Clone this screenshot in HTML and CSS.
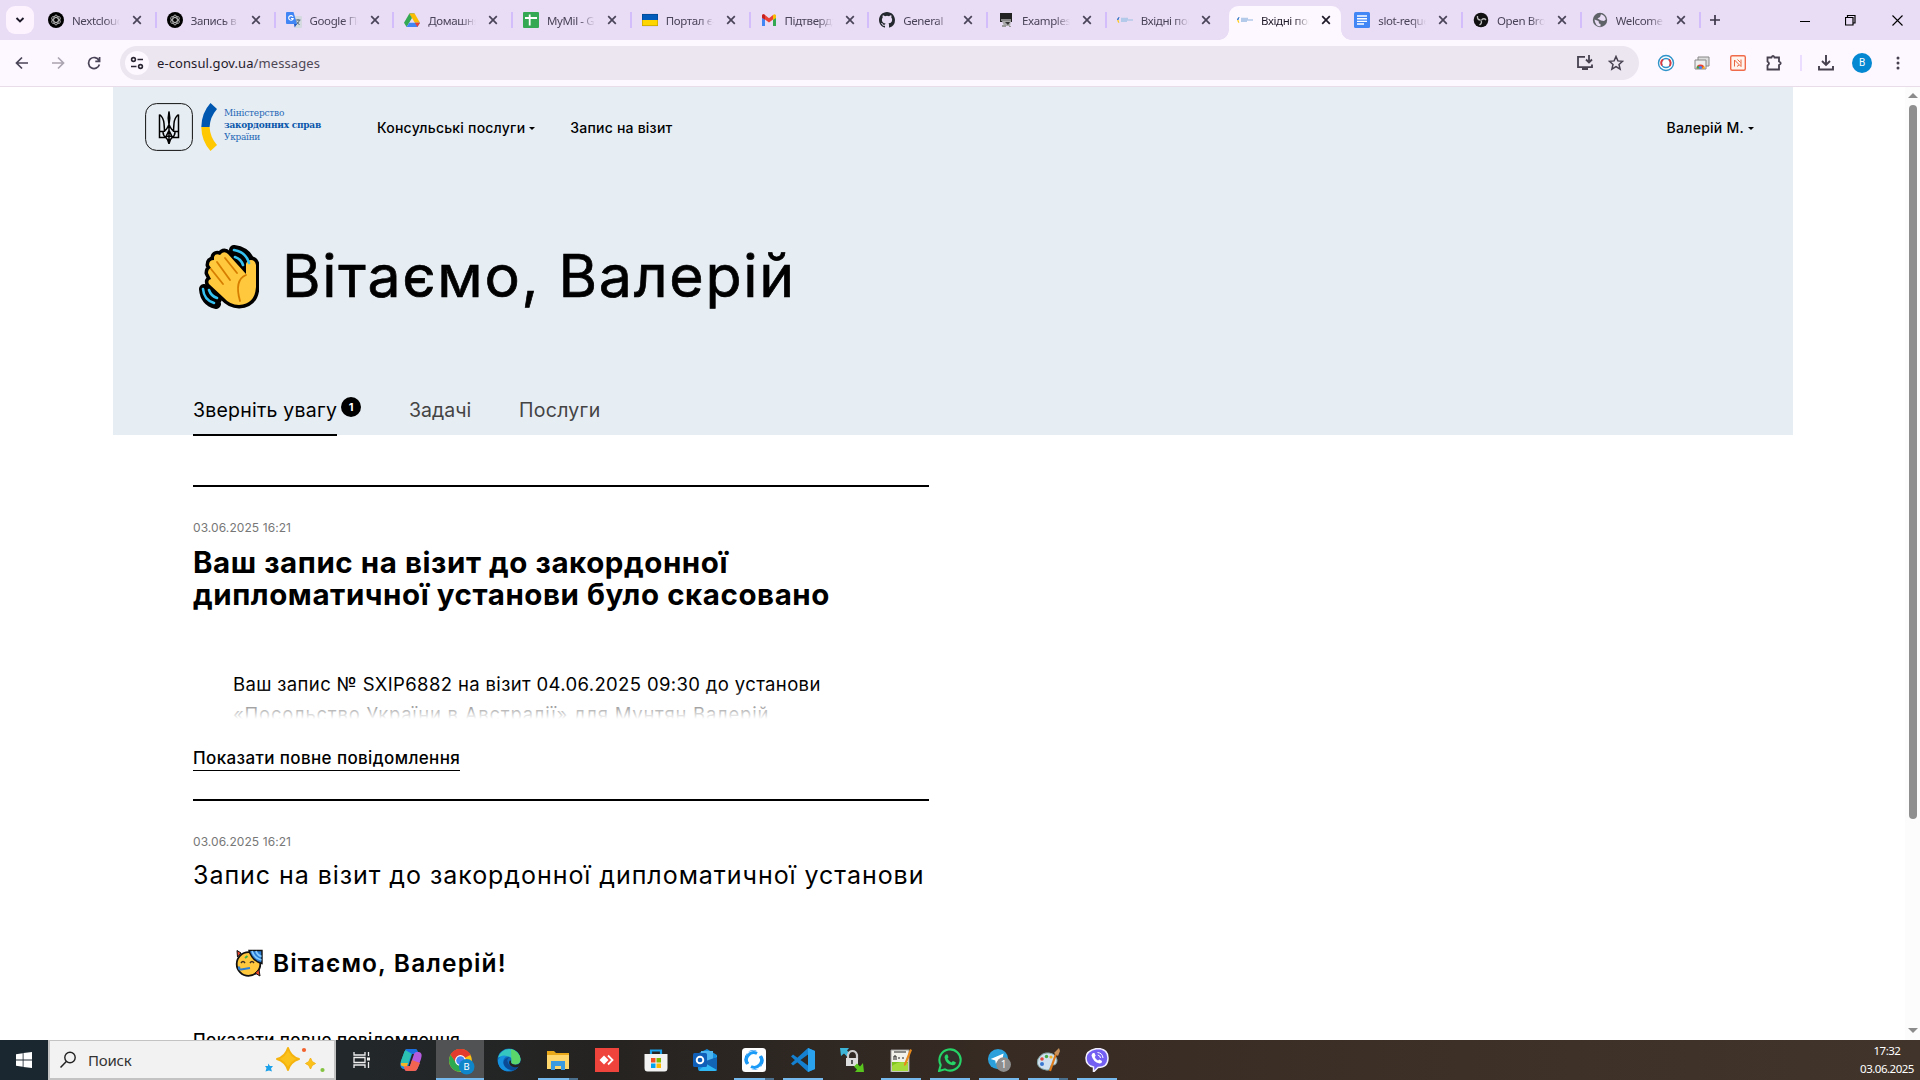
FILE: index.html
```
<!DOCTYPE html>
<html lang="uk">
<head>
<meta charset="utf-8">
<title>Вхідні повідомлення</title>
<link rel="stylesheet" href="styles.css">
</head>
<body>
<svg class="defs" width="0" height="0">
  <symbol id="x" viewBox="0 0 10 10"><path d="M1.2 1.2l7.6 7.6M8.8 1.2L1.2 8.8" stroke="currentColor" stroke-width="1.7" fill="none"/></symbol>
  <symbol id="gpt" viewBox="0 0 16 16"><circle cx="8" cy="8" r="8" fill="#000"/><g fill="none" stroke="#ccc" stroke-width=".8"><ellipse cx="8" cy="8" rx="2.3" ry="4.9"/><ellipse cx="8" cy="8" rx="2.3" ry="4.9" transform="rotate(60 8 8)"/><ellipse cx="8" cy="8" rx="2.3" ry="4.9" transform="rotate(120 8 8)"/></g></symbol>
  <symbol id="mfa" viewBox="0 0 16 16"><path d="M2 5Q-.2 6.500 .3 8H1.500Q1.200 6.700 2.500 5.500z" fill="#0057b7"/><path d="M.3 8Q.4 10 1.800 11L2.400 10.300Q1.400 9.300 1.500 8z" fill="#ffc800"/><path d="M4 6.500h7M4 8h12M4 9.400h6" stroke="#b4caea" stroke-width="1.300"/></symbol>
</svg>

<header class="tabstrip">
  <button class="tab-search"><svg width="10" height="8" viewBox="0 0 10 8"><path d="M1.500 2l3.500 3.500L8.500 2" fill="none" stroke="#1f1a29" stroke-width="1.900"/></svg></button>
  <div class="tabs">
    <div class="tab"><svg class="fav"><use href="#gpt"/></svg><span>Nextcloud</span><svg class="cl"><use href="#x"/></svg></div>
    <div class="tab"><svg class="fav"><use href="#gpt"/></svg><span>Запись в к</span><svg class="cl"><use href="#x"/></svg></div>
    <div class="tab"><svg class="fav" viewBox="0 0 16 16"><path d="M7 4h8q1 0 1 1v10q0 1-1 1H9z" fill="#d5d9e0"/><path d="M9.500 8h5M12 7v1.500M10 12.500q3-1.500 3.500-4.500M10.500 9.500l3 3.500" stroke="#5d7480" fill="none"/><path d="M1 0h6.500l3.500 12H1q-1 0-1-1V1q0-1 1-1z" fill="#4285f4"/><path d="M8 12h3l-2.300 3.500z" fill="#2459c4"/><path d="M7 4.800A2.300 2.300 0 1 0 7.200 6.500H5" stroke="#fff" stroke-width="1.100" fill="none"/></svg><span>Google Пе</span><svg class="cl"><use href="#x"/></svg></div>
    <div class="tab"><svg class="fav" viewBox="0 0 16 16"><path d="M5.400 1.500h5.200L8 6z" fill="#188038"/><path d="M5.400 1.500L0 10.800l2.600 4.200L8 6z" fill="#34a853"/><path d="M10.600 1.500L16 10.800h-5.200L5.400 1.500z" fill="#fbbc04"/><path d="M5.200 10.800H16L13.400 15H2.600z" fill="#4285f4"/><path d="M10.800 10.800H16L13.400 15z" fill="#ea4335"/></svg><span>Домашня с</span><svg class="cl"><use href="#x"/></svg></div>
    <div class="tab"><svg class="fav" viewBox="0 0 16 16"><rect width="16" height="16" rx="1" fill="#34a853"/><path d="M6.700 2.500v11M2 6h12" stroke="#fff" stroke-width="1.800"/></svg><span>MyMil - Go</span><svg class="cl"><use href="#x"/></svg></div>
    <div class="tab"><svg class="fav" viewBox="0 0 16 16"><path d="M0 2h16v6H0z" fill="#005bbb"/><path d="M0 8h16v6H0z" fill="#ffd500"/><path d="M.3 2.300h15.400v11.400H.3z" fill="none" stroke="#0003"/></svg><span>Портал є-</span><svg class="cl"><use href="#x"/></svg></div>
    <div class="tab"><svg class="fav" viewBox="0 0 16 16"><path d="M1 3v11h3V6z" fill="#4285f4"/><path d="M12 6v8h3V3z" fill="#34a853"/><path d="M1 6V3.500Q2 1.500 4 3l4 3.200L12 3v4.500L8 10.500 4 7.500z" fill="#ea4335"/><path d="M12 3q2-1.500 3 .5V6l-3 2z" fill="#fbbc04"/><path d="M1 3.500Q2 1.500 4 3v4.500L1 5.500z" fill="#c5221f"/></svg><span>Підтвердж</span><svg class="cl"><use href="#x"/></svg></div>
    <div class="tab"><svg class="fav" viewBox="0 0 16 16"><path fill="#24292f" d="M8 0C3.580 0 0 3.580 0 8c0 3.540 2.290 6.530 5.470 7.590.4.070.55-.17.55-.38 0-.19-.01-.82-.01-1.490-2.010.37-2.530-.49-2.690-.94-.09-.23-.48-.94-.82-1.130-.28-.15-.68-.52-.01-.53.63-.01 1.080.58 1.230.82.72 1.210 1.870.87 2.330.66.07-.52.28-.87.51-1.070-1.780-.2-3.640-.89-3.640-3.950 0-.87.31-1.590.82-2.150-.08-.2-.36-1.020.08-2.120 0 0 .67-.21 2.200.82a7.420 7.420 0 0 1 4 0c1.530-1.040 2.200-.82 2.200-.82.44 1.100.16 1.920.08 2.120.51.56.82 1.270.82 2.150 0 3.070-1.870 3.750-3.650 3.950.29.25.54.73.54 1.480 0 1.070-.01 1.930-.01 2.200 0 .21.15.46.55.38A8.010 8.010 0 0 0 16 8c0-4.420-3.580-8-8-8z"/></svg><span>General</span><svg class="cl"><use href="#x"/></svg></div>
    <div class="tab"><svg class="fav" viewBox="0 0 16 16"><path d="M2 1h12v9H2z" fill="#222"/><path d="M3 7h10v2H3z" fill="#888"/><path d="M4 9h9l-1 5H6z" fill="#aaa"/><path d="M7 10h5l-2 3z" fill="#333"/><path d="M4 13h4v2H4zM11 14h2v1h-2z" fill="#999"/></svg><span>Examples</span><svg class="cl"><use href="#x"/></svg></div>
    <div class="tab last"><svg class="fav"><use href="#mfa"/></svg><span>Вхідні пов</span><svg class="cl"><use href="#x"/></svg></div>
    <div class="tab active"><svg class="fav"><use href="#mfa"/></svg><span>Вхідні пов</span><svg class="cl"><use href="#x"/></svg></div>
    <div class="tab"><svg class="fav" viewBox="0 0 16 16"><rect width="16" height="16" rx="1.500" fill="#4285f4"/><path d="M3 4h10M3 6.700h10M3 9.400h10M3 12h7" stroke="#fff" stroke-width="1.400"/></svg><span>slot-reque</span><svg class="cl"><use href="#x"/></svg></div>
    <div class="tab"><svg class="fav" viewBox="0 0 16 16"><circle cx="8" cy="8" r="7.300" fill="#111"/><path d="M7.500 8Q4 8 4.500 4M8.500 8Q11 5.500 13 8M8 8.500Q9.500 11 6.500 13" stroke="#bbb" stroke-width="1.300" fill="none"/></svg><span>Open Broa</span><svg class="cl"><use href="#x"/></svg></div>
    <div class="tab"><svg class="fav" viewBox="0 0 16 16"><circle cx="8" cy="8" r="7.200" fill="#5f6368"/><path d="M2.500 7.500l4 1.500.5 2.500 1.500.5v2.500Q3 14 2.500 7.500zM9 2.200L8 5 5.500 6.500 9 8.500l3 .5 1.800-1.500Q13 3 9 2.200z" fill="#e9dcf5"/></svg><span>Welcome t</span><svg class="cl"><use href="#x"/></svg></div>
  </div>
  <svg class="plus" width="12" height="12" viewBox="0 0 12 12"><path d="M6 1v10M1 6h10" stroke="#3c3649" stroke-width="1.700"/></svg>
  <div class="winctl">
    <svg width="10" height="11" viewBox="0 0 10 11"><path d="M0 6.500h10" stroke="#000"/></svg>
    <svg width="11" height="11" viewBox="0 0 11 11"><path d="M.5 2.500h7.500v7.500H.5zM2.500 2.500V.5H10v7.500H8" stroke="#000" fill="none" stroke-width="1.200"/></svg>
    <svg width="11" height="11" viewBox="0 0 11 11"><path d="M.5.5l10 10M10.500.5l-10 10" stroke="#000" stroke-width="1.100"/></svg>
  </div>
</header>

<div class="toolbar">
  <div class="nav-btns">
    <svg width="14" height="14" viewBox="0 0 14 14"><path d="M13 7H2M7 1.500L1.500 7 7 12.500" fill="none" stroke="#4a4458" stroke-width="1.700"/></svg>
    <svg width="14" height="14" viewBox="0 0 14 14"><path d="M1 7h11M7 1.500L12.500 7 7 12.500" fill="none" stroke="#aaa4b0" stroke-width="1.700"/></svg>
    <svg width="14" height="14" viewBox="0 0 14 14"><path d="M12 4.500A5.500 5.500 0 1 0 12.400 8.500M12.600 1v4.300H8.300" fill="none" stroke="#4a4458" stroke-width="1.700"/></svg>
  </div>
  <div class="omnibox">
    <span class="site"><svg width="14" height="14" viewBox="0 0 14 14"><g fill="none" stroke="#2b2633" stroke-width="1.600"><circle cx="3.500" cy="3.500" r="1.900"/><path d="M7.500 3.500H13M1 10.500h5.500"/><circle cx="10.500" cy="10.500" r="1.900"/></g></svg></span>
    <span class="url">e-consul.gov.ua<i>/messages</i></span>
    <svg class="inst" width="18" height="16" viewBox="0 0 18 16"><path d="M9 1.800H2v10.400h14V9.500M13 0v7M10 4.500l3 3 3-3M6 14h6" fill="none" stroke="#46404f" stroke-width="1.800"/></svg>
    <svg width="16" height="16" viewBox="0 0 16 16"><path d="M8 1.500l1.900 4.400 4.700.4-3.600 3.100 1.100 4.700L8 11.600l-4.100 2.500L5 9.400 1.400 6.300l4.700-.4z" fill="none" stroke="#46404f" stroke-width="1.500"/></svg>
  </div>
  <div class="exts">
    <svg width="18" height="18" viewBox="0 0 18 18"><circle cx="9" cy="9" r="7.500" fill="#fff" stroke="#2e93c9" stroke-width="1.400"/><circle cx="9" cy="9" r="4.600" fill="none" stroke="#2e93c9" stroke-width="1.500"/><path d="M5 11.500A4.600 4.600 0 0 1 6 5.500M12 5.500a4.600 4.600 0 0 1 .5 6.500" fill="none" stroke="#e0393e" stroke-width="1.800"/></svg>
    <svg width="18" height="18" viewBox="0 0 18 18"><path d="M5 3h11v9H5z" fill="#ddd" stroke="#888"/><path d="M2 6h11v9H2z" fill="#eee" stroke="#888"/><path d="M3.500 14.500a4 4 0 0 1 8 0" fill="#ea4335"/><path d="M3.500 14.500a4 4 0 0 1 1.500-3l2 3z" fill="#34a853"/><path d="M9 14.500l2-2.500q1 1 .5 2.500z" fill="#fbbc04"/><circle cx="7.500" cy="13.500" r="1.600" fill="#4285f4"/></svg>
    <svg width="18" height="18" viewBox="0 0 18 18"><rect x="1.700" y="1.700" width="14.600" height="14.600" rx="1.500" fill="#fff4ee" stroke="#ef6b4a" stroke-width="1.400"/><path d="M5.500 12.500V6l6.500 6.500V5.500M8.500 5.500l3 3M10 11l-2 1.500" stroke="#e8663f" fill="none" stroke-width="1"/></svg>
    <svg width="18" height="18" viewBox="0 0 18 18"><path d="M2.500 3.500h4Q8 .3 9.500 3.500H14v4q3.500 1.500 0 3.500v4.500H2.500v-4q3-2 0-4z" fill="none" stroke="#46404f" stroke-width="1.800"/></svg>
  </div>
  <div class="right-btns">
    <svg width="16" height="16" viewBox="0 0 16 16"><path d="M8 0v9.500M4 6l4 4 4-4M1 11v3.500h14V11" fill="none" stroke="#46404f" stroke-width="1.900"/></svg>
    <span class="avatar">B</span>
    <svg width="4" height="14" viewBox="0 0 4 14" fill="#46404f"><circle cx="2" cy="2" r="1.500"/><circle cx="2" cy="7" r="1.500"/><circle cx="2" cy="12" r="1.500"/></svg>
  </div>
</div>

<main class="viewport">
  <div class="page">
    <section class="hero">
      <div class="top">
        <svg class="trident" width="48" height="48" viewBox="0 0 48 48"><rect x=".6" y=".6" width="46.800" height="46.800" rx="11" fill="none" stroke="#111"/><g fill="none" stroke="#000" stroke-width="1.500"><path d="M24 8.500v19M24 8.500q-1.500 6 0 13q1.500-7 0-13M14.500 11.500v23h6.200M33.500 11.500v23h-6.200M14.500 11.500q4 3 4.500 9t.5 8.500M33.500 11.500q-4 3-4.500 9t-.5 8.500M14.500 28.500h3.500q3 0 6-7q3 7 6 7h3.500M18 28.500q0 4 2.700 6t3.300 6.500q.5-4.500 3.300-6.500t2.700-6M20.500 34.500q3.500-7 3.500-7t3.500 7q-3.500-3-7 0zM24 27.500V41"/></g></svg>
        <svg class="arc" width="18" height="48" viewBox="0 0 18 48"><path d="M9.500 0L16 6Q9 14 8.600 24H.3Q.5 10 9.500 0z" fill="#0057b0"/><path d="M.3 24h8.300Q9 34 16 42l-6.500 6Q.5 38 .3 24z" fill="#ffc800"/></svg>
        <div class="brand"><span class="b1">Міністерство</span><b>закордонних справ</b><span class="b3">України</span></div>
        <nav class="menu"><span>Консульські послуги<i class="caret"></i></span><span>Запис на візит</span></nav>
        <span class="user">Валерій М.<i class="caret"></i></span>
      </div>
      <h1><svg width="60" height="64" viewBox="0 0 60 64"><g stroke-linecap="round" stroke-linejoin="round"><g stroke="#000" stroke-width="10" fill="none"><path d="M35 5q14 2 17 15M35 12q8 2 10 9M5 44q1 12 12 15M10 46q2 6 8 8"/></g><path d="M12 34L9 28q0-4 3-5l-2-3q0-5 5-5l0-3q1-4 6-2l2-2q3-2 6 1l18 20V19q1-4 5-4t5 5v22Q56 59 40 60q-9 0-16-8L10 39q-2-4 2-5z" fill="#ffc83d" stroke="#000" stroke-width="7"/><path d="M12 34L9 28q0-4 3-5l-2-3q0-5 5-5l0-3q1-4 6-2l2-2q3-2 6 1l18 20V19q1-4 5-4t5 5v22Q56 59 40 60q-9 0-16-8L10 39q-2-4 2-5z" fill="#ffc83d"/><path d="M26 13l12 15M18 17l13 18M12 24l12 15M47 30q-12 5-6 26" fill="none" stroke="#d67d00" stroke-width="1.800"/><path d="M35 5q12 2 15 13M36 12q6 2 8 8M4 44q1 11 11 14M10 45q2 6 8 8" stroke="#35c1f1" stroke-width="2.600" fill="none"/></g></svg><span>Вітаємо, Валерій</span></h1>
      <div class="sections">
        <span class="sec on">Зверніть увагу</span><span class="badge">1</span>
        <span class="sec s2">Задачі</span><span class="sec s3">Послуги</span>
      </div>
    </section>

    <article class="msg">
      <time>03.06.2025 16:21</time>
      <h2>Ваш запис на візит до закордонної<br>дипломатичної установи було скасовано</h2>
      <div class="excerpt"><p>Ваш запис № SXIP6882 на візит 04.06.2025 09:30 до установи</p><p class="l2">«Посольство України в Австралії» для Мунтян Валерій</p></div>
      <a class="more">Показати повне повідомлення</a>
    </article>
    <article class="msg second">
      <time>03.06.2025 16:21</time>
      <h2 class="light">Запис на візит до закордонної дипломатичної установи</h2>
      <div class="greet"><svg width="30" height="30" viewBox="0 0 30 30"><circle cx="14.500" cy="16" r="11.800" fill="#ffc83d" stroke="#111" stroke-width="1.800"/><path d="M15 2.500h13v13Q18 13 15 2.500z" fill="#2b7cd3" stroke="#111" stroke-width="1.400"/><path d="M18 3q2 7 9.500 9M22 3q1 4 5.500 5.500" stroke="#83cbff" stroke-width="1.800" fill="none"/><path d="M3 2.500l4 2.500-3.500 4zM26 28l-5-3 4-3.500z" fill="#e8442e" stroke="#111"/><path d="M7 15q2-3 4 0M16 15q2-3 4 0" fill="none" stroke="#403020" stroke-width="1.500"/><path d="M11 10l2.500-2" stroke="#3bb44a" stroke-width="2"/><path d="M16 20l-9 1.500Q4 21.500 5.500 18.500" fill="none" stroke="#2b7cd3" stroke-width="2.200"/></svg><span>Вітаємо, Валерій!</span></div>
      <a class="more">Показати повне повідомлення</a>
    </article>
  </div>
  <div class="scroll"><i class="up"></i><i class="thumb"></i><i class="down"></i></div>
</main>

<footer class="taskbar">
  <div class="start"><svg width="16" height="16" viewBox="0 0 16 16"><path d="M0 2.200l6.700-1v6.400H0zM7.500 1.100L16 0v7.600H7.500zM0 8.400h6.700v6.400l-6.700-1zM7.500 8.400H16V16l-8.500-1.100z" fill="#fff"/></svg></div>
  <div class="search"><svg width="18" height="18" viewBox="0 0 18 18"><circle cx="11" cy="6.500" r="5.200" fill="none" stroke="#222" stroke-width="1.400"/><path d="M7.300 10.500L1.500 16.500" stroke="#222" stroke-width="1.500"/></svg><span>Поиск</span>
    <svg class="stars" width="62" height="28" viewBox="0 0 62 28"><path d="M24 2q2.500 8.500 11 11-8.500 2.500-11 11-2.500-8.500-11-11 8.500-2.500 11-11z" fill="#fbc21b" stroke="#f5b30f" stroke-linejoin="round" stroke-width="2"/><path d="M46.500 12q1 4.500 5 5.500-4 1-5 5.500-1-4.500-5-5.500 4-1 5-5.500z" fill="#fbc21b" stroke="#f5b30f"/><path d="M4 17.500l2 2.500 3 0-2 2.500 1 3-3-1-3.500 1 1-3.500-1.500-2 3 0z" fill="#1ba0ea"/><circle cx="40" cy="4" r="2.100" fill="#f2622f"/><circle cx="58.500" cy="24" r="2.100" fill="#84c341"/></svg></div>
  <div class="apps">
    <div class="app"><svg viewBox="0 0 24 24"><path d="M4 4v3h11V4M4 20v-3h11v3M4 9.500h11v5H4zM18.500 4v4M18.500 14v6" fill="none" stroke="#eee" stroke-width="1.300"/><path d="M17 9.500h3v3h-3z" fill="#eee"/></svg></div>
    <div class="app"><svg viewBox="0 0 24 24"><path d="M9 1h7q2 0 2.500 2l.7 3H13l-4 13q-.7 2-2.700 2H4Q0 19 2 13L5.500 3.500Q6.500 1 9 1z" fill="#1d8be0"/><path d="M5.500 3.500Q6.500 1 9 1h7L12 7l-3 9-7 1q-.5-2 0-4z" fill="#2cc0b2"/><path d="M6 1.700Q7 1 9 1h7q2 0 2.500 2l.7 3H13z" fill="#1b6fe0"/><path d="M15 23H8q-2 0-2.500-2L5 18h6l4-12q.7-2 2.700-2H20q4 1 2 7l-3.500 9.500Q17.500 23 15 23z" fill="#b45be0"/><path d="M15 23H8q-2 0-2.500-2L5 18h6l2-6 8 3-2.500 5.500Q17.500 23 15 23z" fill="#f2644f"/><path d="M2 15q-1 3 2.500 3.500L8 18l1-3z" fill="#f5b52a"/></svg></div>
    <div class="app cur"><svg viewBox="0 0 26 26"><circle cx="12" cy="12" r="11" fill="#fbc116"/><path d="M12 12L2.500 6.500A11 11 0 0 1 21.500 6.500z" fill="#e33b2e"/><path d="M2.500 6.500A11 11 0 0 0 11 23l4-8-7-1z" fill="#2da94f"/><path d="M12 7H21.800A11 11 0 0 0 2.500 6.500L7.500 14z" fill="#e33b2e"/><circle cx="12" cy="12" r="5.200" fill="#fff"/><circle cx="12" cy="12" r="4.100" fill="#4285f4"/><circle cx="18" cy="18" r="7.500" fill="#0f86c9"/><text x="18" y="21.500" text-anchor="middle" font-size="9.500" font-family="Roboto, sans-serif" fill="#fff">B</text></svg></div>
    <div class="app"><svg viewBox="0 0 24 24"><circle cx="12" cy="12" r="11.500" fill="#0f6cbd"/><path d="M1 9.500A11.500 11.500 0 0 1 23.500 11q0 5-5 5.500-5 0-4-3 1-4-3-5-6-1.500-10.500 1z" fill="#35c6c0"/><path d="M14 1a11.500 11.500 0 0 1 9.500 10q0 5-5 5.500-5 0-4-3z" fill="#5ad66a"/><path d="M1 12q3-6 9-4-5 3-3.500 8T14 22.500Q4 25 1 15z" fill="#1490df"/><path d="M13.500 9q-4 1-3 4.500 1 5 7 5.500 3 0 4.500-1-3 5-8 4-7-2-7.500-7 0-5 7-6z" fill="#0b4a94"/><path d="M14 12.500q-1 4 4.500 4.200 3 0 5-2.500l-1 4q-3 2-7 .5-4.500-2-3-6z" fill="#252321"/></svg></div>
    <div class="app run two"><svg viewBox="0 0 24 24"><path d="M1 3h7l2 2h13v16H1z" fill="#e8a81a"/><path d="M1 7h22v14H1z" fill="#ffd66b"/><path d="M5 13h14v9h-4v-4H9v4H5z" fill="#3c9ae0"/></svg></div>
    <div class="app"><svg viewBox="0 0 24 24"><path d="M0 0h24v24H0z" fill="#ef443b"/><path d="M4.500 12L9 7.500l4.500 4.500L9 16.500z" fill="#fff"/><path d="M13 7.500l4.500 4.500-4.500 4.500" fill="none" stroke="#fff" stroke-width="1.800"/></svg></div>
    <div class="app"><svg viewBox="0 0 24 24"><path d="M7 7V2.500h10V7" fill="none" stroke="#1aa0e8" stroke-width="2.200"/><path d="M.5 6h23v14q0 3.500-3 3.500h-17q-3 0-3-3.500z" fill="#f2f2f2"/><path d="M7 10h4.500v4.500H7z" fill="#f25022"/><path d="M12.500 10H17v4.500h-4.500z" fill="#7fba00"/><path d="M7 15.500h4.500V20H7z" fill="#00a4ef"/><path d="M12.500 15.500H17V20h-4.500z" fill="#ffb900"/></svg></div>
    <div class="app"><svg viewBox="0 0 24 24"><path d="M4 6l10-5 10 6v14q0 2-2 2H7q-2 0-2-2z" fill="#1490df"/><path d="M8 3h12v10H8z" fill="#4cb5f0"/><path d="M24 8v13q0 2-2 2H7l-1-1z" fill="#2fb8f3"/><path d="M24 9v13L10 14z" fill="#1264b5"/><rect y="5" width="14" height="14" rx="1.500" fill="#0f5fb8"/><circle cx="7" cy="12" r="3.300" fill="none" stroke="#fff" stroke-width="1.900"/></svg></div>
    <div class="app run two"><svg viewBox="0 0 24 24"><rect width="24" height="24" rx="3.500" fill="#fff"/><path d="M15.500 3.500A9 9 0 0 0 4 16.500L7 14.500A6 6 0 0 1 15.500 3.500z" fill="#0b84ee"/><path d="M8.500 20.500A9 9 0 0 0 20 7.500L17 9.500A6 6 0 0 1 8.500 20.500z" fill="#0b84ee"/><path d="M5.800 16A7.200 7.200 0 0 1 15 5.500M18.200 8A7.200 7.200 0 0 1 9 18.500" fill="none" stroke="#1b9bf8" stroke-width="3"/></svg></div>
    <div class="app run"><svg viewBox="0 0 24 24"><path d="M17 0l7 3v18l-7 3L0 8.500 2 6.500l15 11V6.500L2 17.500 0 15.500z" fill="#1480cf"/><path d="M17 0l7 3v18l-7 3z" fill="#2ba2ee"/></svg></div>
    <div class="app"><svg viewBox="0 0 24 24"><path d="M0 0h9L7 2.500l3 3-3 3-3-3L1 8z" fill="#3db5d9"/><path d="M8 12V7q1-4 4.500-4T17 7v5" fill="none" stroke="#ccc" stroke-width="2.200"/><path d="M6 10h12v8H6z" fill="#ddd"/><path d="M11 12h2v4h-2z" fill="#555"/><path d="M24 24h-9l2-2.500-3-3 3-3 3 3L23 15z" fill="#57c51d"/></svg></div>
    <div class="app run"><svg viewBox="0 0 24 24"><path d="M2 2h18v22H2z" fill="#f2f2ea"/><path d="M3 14h16v9H3z" fill="#7ec51d"/><path d="M3 18q8-6 16-3v8H3z" fill="#a5dc3c"/><path d="M2 2h18v22H2z" fill="none" stroke="#999"/><path d="M5 12V8h2v4M9 10h2M13 10h2M5 4h12" stroke="#222" fill="none"/><path d="M21 1l2 1-6 15-2 1 0-2z" fill="#e8891c"/></svg></div>
    <div class="app run"><svg viewBox="0 0 24 24"><path d="M1 23l1.700-6A10.600 10.600 0 1 1 7 21.300z" fill="#31302b" stroke="#25d366" stroke-width="2.100"/><path d="M8 6.500l1.500 0 1 2.800-1 1.400q1.500 2.500 4 3.700l1.400-1.400 2.900 1.300q0 3-3 3Q8 16.500 6.500 9.500 6.500 7.500 8 6.500z" fill="#25d366"/></svg></div>
    <div class="app run"><svg viewBox="0 0 26 26"><circle cx="12" cy="12" r="11" fill="#2ba0da"/><path d="M4 12l14-6-2.500 12-4-3-2 2-.5-3.500z" fill="#fff"/><circle cx="18" cy="18" r="8" fill="#8d8d8d"/><text x="18" y="22" text-anchor="middle" font-size="11" font-family="Noto Sans, sans-serif" fill="#fff">1</text></svg></div>
    <div class="app run two"><svg viewBox="0 0 24 24"><path d="M2 11q4-7 11-6t8 7q0 5-4 5-3 0-3 3 0 3-4 2Q-1 20 2 11z" fill="#cfe0ee" stroke="#8aa"/><circle cx="6" cy="11" r="1.800" fill="#e2463a"/><circle cx="10.500" cy="8.500" r="1.700" fill="#46a948"/><circle cx="15" cy="9" r="1.600" fill="#f0b429"/><circle cx="6" cy="16" r="2" fill="#3a78d0"/><path d="M20 6l-6 17" stroke="#dc7a1b" stroke-width="2.200"/><path d="M18 5l5-5 1 3-2 5z" fill="#c8925a"/></svg></div>
    <div class="app run"><svg viewBox="0 0 24 24"><path d="M12 .5Q23 .5 23 10t-10 9.500L8.500 24v-5Q1 17.500 1 10T12 .5z" fill="#7360f2" stroke="#f3f0ff" stroke-width="1.500"/><path d="M8 5l1.500 0 1.200 2.800-1 1.200q1 2.500 3.300 3.500l1.300-1 2.700 1.500q0 2.500-2.500 2.500Q8 14 6.500 7.500 6.800 5.800 8 5z" fill="#fff"/><path d="M12.500 4.500q5 .5 5.500 5.500M12.800 7q2.500.5 2.700 3" fill="none" stroke="#fff" stroke-width="1"/></svg></div>
  </div>
  <div class="clock"><span>17:32</span><span>03.06.2025</span></div>
</footer>
</body>
</html>
```
FILE: styles.css
```
* { box-sizing: border-box; }
body { margin: 0; width: 1920px; height: 1080px; overflow: hidden; display: grid; grid-template-rows: 40px 47px 953px 40px; background: #fff; color: #000; font-family: Inter, sans-serif; }
i { font-style: normal; }
p { margin: 0; }
.defs { display: none; }

/* Browser tab strip */
.tabstrip { display: flex; align-items: center; background: #e9dcf5; font: 11.5px "Noto Sans", sans-serif; color: #4a4458; }
.tab-search { flex: none; width: 28px; height: 28px; margin: 0 3px 0 6px; padding: 0; border: 0; border-radius: 9px; background: #fcf3ff; display: grid; place-items: center; }
.tabs { display: flex; flex: none; height: 40px; }
.tab { position: relative; width: 118.75px; height: 40px; padding-left: 11px; display: flex; align-items: center; }
.tab::after { content: ""; position: absolute; right: -1px; top: 12px; width: 2px; height: 16px; background: #d3bdfb; }
.tab.last::after, .tab.active::after { display: none; }
.fav { width: 16px; height: 16px; flex: none; }
.tab span { width: 48px; margin: 0 0 0 8px; overflow: hidden; white-space: nowrap; letter-spacing: -.38px; mask-image: linear-gradient(90deg, #000 33px, transparent 48px); }
.cl { width: 10px; height: 10px; margin-left: 12px; flex: none; }
.tab.active { height: 34px; margin: 6px 2px 0 4.500px; width: 112.25px; padding: 0 0 6px 8px; background: #fdf7ff; border-radius: 9px 9px 0 0; color: #1f1a29; }
.tab.active::before { content: ""; position: absolute; left: -10px; right: -10px; bottom: 0; height: 10px; background: radial-gradient(circle at 0 0, transparent 9.500px, #fdf7ff 10px) left / 10px 10px no-repeat, radial-gradient(circle at 100% 0, transparent 9.500px, #fdf7ff 10px) right / 10px 10px no-repeat; }
.plus { margin-left: 9px; }
.winctl { margin-left: auto; padding-right: 17.500px; display: flex; gap: 35.500px; }

/* Address bar */
.toolbar { display: flex; align-items: center; padding-left: 15px; background: #fdf7ff; border-bottom: 1px solid #e9dde9; }
.nav-btns { display: flex; gap: 22px; width: 105px; }
.omnibox { width: 1519px; height: 34px; padding: 0 15px 0 5px; border-radius: 17px; background: #ece6f1; display: flex; align-items: center; }
.site { width: 24px; height: 24px; border-radius: 50%; background: #fdf7ff; display: grid; place-items: center; }
.url { margin-left: 8px; font: 13px "Noto Sans", sans-serif; letter-spacing: .09px; color: #1f1a29; }
.url i { color: #4f4956; }
.inst { margin: 0 14px 0 auto; }
.exts { display: flex; gap: 18px; margin-left: 18px; padding-right: 17px; border-right: 2px solid #eaddff; }
.exts svg { margin: -1px 0; }
.right-btns { display: flex; align-items: center; margin-left: 16px; }
.avatar { width: 20px; height: 20px; margin: 0 24px 0 18px; border-radius: 50%; background: #0488d1; color: #fff; font: 10px/20px Roboto, sans-serif; text-align: center; }

/* Site */
.viewport { display: flex; overflow: hidden; }
.page { width: 1905px; height: 953px; overflow: hidden; }
.hero { height: 348px; margin: 0 112px 0 113px; padding: 16px 39px 0 32px; background: #e6edf3; }
.top { display: flex; height: 48px; align-items: center; font-size: 14px; font-weight: 500; }
.arc { margin-left: 8px; }
.brand { width: 98px; margin: -2px 0 0 5px; display: flex; flex-direction: column; font: 9px/11.800px "DejaVu Serif", serif; color: #1f68b6; white-space: nowrap; }
.b1 { letter-spacing: -.2px; }
.brand b { letter-spacing: -.25px; color: #0a57ab; }
.b3 { letter-spacing: -.3px; }
.menu { display: flex; gap: 35px; margin-left: 55px; letter-spacing: .22px; }
.caret { display: inline-block; margin-left: 4px; border: 3.500px solid transparent; border-top: 3.500px solid #000; border-bottom: 0; border-left-width: 3px; border-right-width: 3px; vertical-align: 2.500px; }
.user { margin-left: auto; letter-spacing: .25px; }
h1 { display: flex; gap: 23px; margin: 93px 0 0 54px; font-size: 59px; line-height: 64px; font-weight: 400; letter-spacing: 1.700px; -webkit-text-stroke: .7px #000; }
.hero h1 svg { flex: none; margin-top: 1px; }
.sections { display: flex; margin: 89px 0 0 48px; font-size: 19.500px; line-height: 24px; color: #444; height: 38px; }
.sec.on { width: 144px; border-bottom: 2px solid #000; color: #000; letter-spacing: .22px; white-space: nowrap; }
.badge { width: 20px; height: 20px; margin: -1px 48px 0 4px; border-radius: 50%; background: #000; color: #fff; font-size: 11px; line-height: 20px; font-weight: 700; text-align: center; }
.s2 { width: 62px; letter-spacing: 0; }
.s3 { margin-left: 48px; letter-spacing: .28px; }

.msg { width: 736px; margin: 50px 0 0 193px; padding-top: 31px; border-top: 2px solid #000; }
.msg.second { margin-top: 28px; }
time { display: block; font-size: 12px; line-height: 20px; letter-spacing: .08px; color: #777; }
h2 { margin: 8px 0 0; font-size: 29.500px; line-height: 32px; font-weight: 700; letter-spacing: .56px; white-space: nowrap; }
h2.light { margin-top: 7px; font-size: 25px; font-weight: 400; letter-spacing: .950px; }
.excerpt { position: relative; height: 50px; margin: 59px 0 29px; padding-left: 40px; overflow: hidden; font-size: 18.500px; line-height: 30px; letter-spacing: .36px; white-space: nowrap; }
.excerpt .l2 { letter-spacing: .755px; }
.excerpt::after { content: ""; position: absolute; inset: 18px 0 0; background: linear-gradient(#fff0, #fff); }
.more { display: table; padding-bottom: 2px; border-bottom: 1px solid #000; font-size: 17px; line-height: 20px; font-weight: 500; letter-spacing: .38px; white-space: nowrap; }
.greet { display: flex; gap: 9px; height: 30px; margin: 57px 0 52px 41px; font-size: 24.500px; line-height: 31px; font-weight: 600; letter-spacing: 1.130px; }

.scroll { width: 15px; background: #fcfcfc; display: flex; flex-direction: column; align-items: center; padding: 6px 0 7px; }
.up { border: 5px solid transparent; border-top: 0; border-bottom: 5px solid #8b8b8b; margin-bottom: 7px; }
.thumb { width: 8px; height: 714px; border-radius: 4px; background: #8f8f8f; }
.down { margin-top: auto; border: 5px solid transparent; border-bottom: 0; border-top: 5px solid #8b8b8b; }

/* Windows taskbar */
.taskbar { display: flex; background: linear-gradient(90deg, #1a2730, #22272a 360px, #252321 600px, #372b23 1000px, #41352b); }
.start { width: 48px; display: grid; place-items: center; }
.search { width: 288px; display: flex; align-items: center; padding-left: 9px; background: #f2f2f2; border: 2px solid #c3c3c3; border-top-width: 1px; font: 15px "Noto Sans", sans-serif; color: #333; }
.search span { margin-left: 11px; letter-spacing: -.2px; }
.stars { margin: 0 8px 0 auto; }
.apps { display: flex; gap: 1px; margin-left: 2px; }
.app { width: 48px; display: grid; place-items: center; position: relative; }
.app svg { width: 24px; height: 24px; }
.app.cur { background: #505254; }
.app.cur svg { width: 27px; height: 27px; margin: 2px 0 0 2px; }
.run::after, .cur::after { content: ""; position: absolute; left: 4px; right: 4px; bottom: 0; height: 2px; background: #76b9ed; }
.cur::after { left: 0; right: 0; }
.two::after { background: linear-gradient(90deg, #76b9ed 31px, #4b708d 31px); }
.clock { margin-left: auto; width: 66px; padding-top: 2px; display: flex; flex-direction: column; align-items: center; font: 11.500px/18px "Noto Sans", sans-serif; letter-spacing: -.5px; color: #fff; }
```
